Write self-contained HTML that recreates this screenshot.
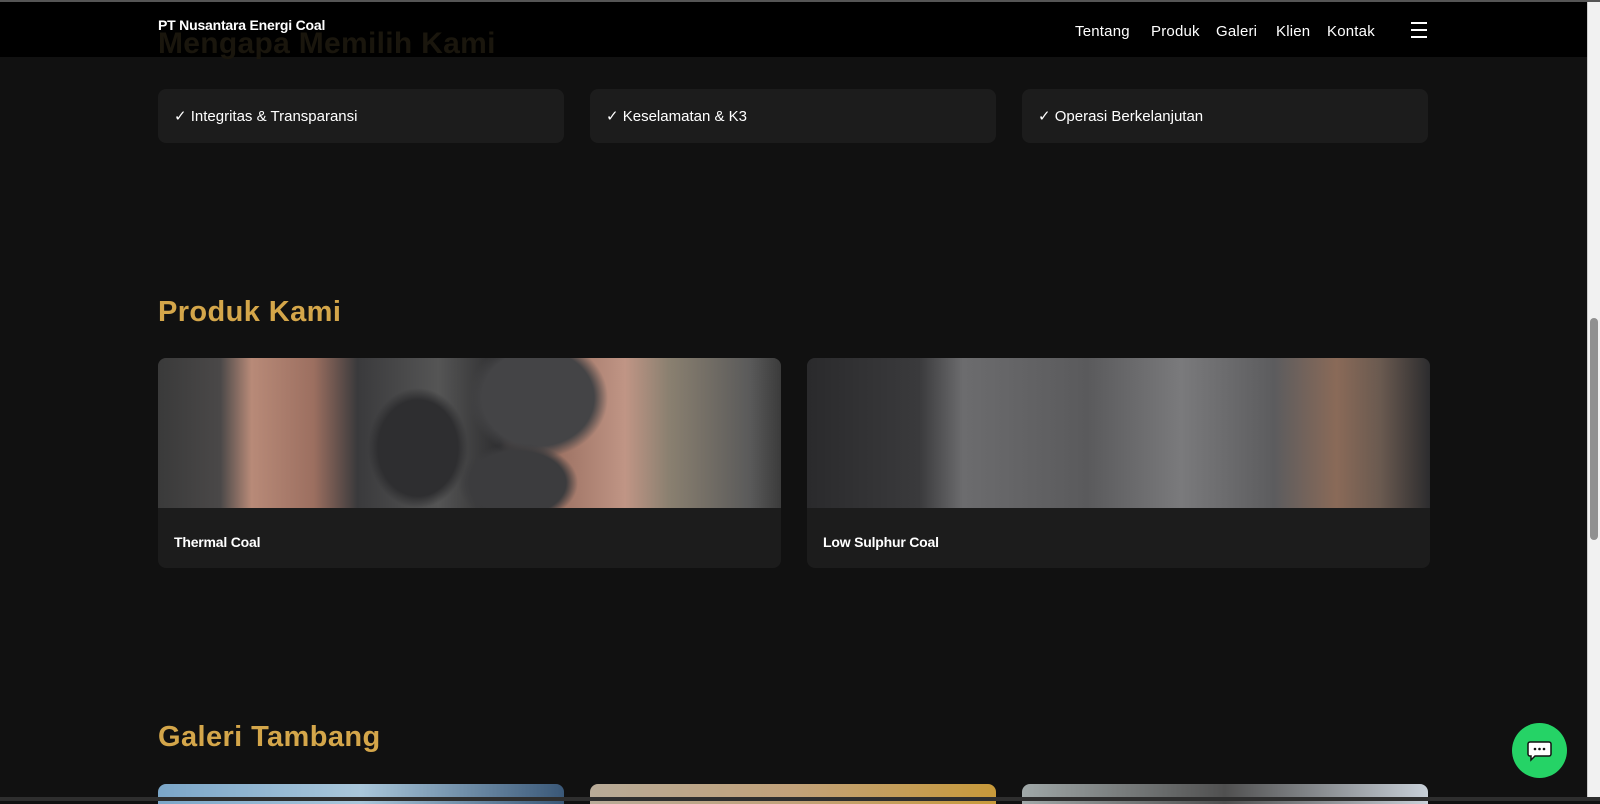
<!DOCTYPE html>
<html><head><meta charset="utf-8"><style>
*{margin:0;padding:0;box-sizing:border-box}
html,body{width:1600px;height:801px;overflow:hidden;background:#111;font-family:"Liberation Sans",sans-serif;color:#fff}
.topline{position:absolute;left:0;top:0;width:1600px;height:2px;background:#555}
.nav{position:absolute;left:0;top:2px;width:1587px;height:55px;background:#000;z-index:2}
.ghost{position:absolute;left:158px;top:27px;font-size:30px;font-weight:bold;letter-spacing:0.3px;z-index:3}
.logo{position:absolute;left:158px;top:17px;font-size:14px;font-weight:bold;letter-spacing:-0.2px;z-index:3}
.nl{position:absolute;top:23px;font-size:15px;letter-spacing:0.2px;z-index:3}
.ham{position:absolute;left:1411px;top:22px;width:16px;z-index:3}
.ham i{display:block;height:2px;background:#fff;margin-bottom:5px}
.card{position:absolute;top:89px;height:54px;width:406px;background:#1c1c1c;border-radius:8px;font-size:15px;padding:18px 0 0 16px}
h2{position:absolute;left:158px;font-size:29px;font-weight:bold;color:#d4a64a;letter-spacing:0.4px}
.pc{position:absolute;top:358px;width:623px;height:210px;background:#1c1c1c;border-radius:8px;overflow:hidden}
.pc .img{height:150px}
.pc .t{position:absolute;left:16px;top:176px;font-size:14px;font-weight:bold;letter-spacing:-0.2px}
.g{position:absolute;top:784px;width:406px;height:20px;border-radius:8px 8px 0 0}
.sb{position:absolute;left:1587px;top:2px;width:13px;height:795px;background:#f1f1f1;border-left:1px solid #ccc}
.th{position:absolute;left:1590px;top:318px;width:8px;height:222px;background:#909090;border-radius:4px}
.bb{position:absolute;left:0;top:797px;width:1600px;height:4px;background:#2e2e2e}
.chat{position:absolute;left:1512px;top:723px;width:55px;height:55px;border-radius:50%;background:#25d366}
</style></head><body>
<div class="topline"></div>
<div class="nav"></div>
<div class="ghost" style="color:#1a160d">Mengapa Memilih Kami</div>
<div class="logo">PT Nusantara Energi Coal</div>
<div class="nl" style="left:1075px">Tentang</div>
<div class="nl" style="left:1151px">Produk</div>
<div class="nl" style="left:1216px">Galeri</div>
<div class="nl" style="left:1276px">Klien</div>
<div class="nl" style="left:1327px">Kontak</div>
<div class="ham"><i></i><i></i><i></i></div>

<div class="card" style="left:158px">✓ Integritas &amp; Transparansi</div>
<div class="card" style="left:590px">✓ Keselamatan &amp; K3</div>
<div class="card" style="left:1022px">✓ Operasi Berkelanjutan</div>

<h2 style="top:296px">Produk Kami</h2>
<div class="pc" style="left:158px">
 <div class="img" style="background:radial-gradient(ellipse 50px 60px at 260px 90px,#2e2e30 80%,transparent 100%),radial-gradient(ellipse 60px 40px at 360px 125px,#3c3c3e 80%,transparent 100%),radial-gradient(ellipse 70px 60px at 380px 40px,#444446 80%,transparent 100%),linear-gradient(90deg,#3a3a3a 0%,#4a4848 10%,#b88a78 15%,#9c6f60 25%,#3a3a3c 32%,#555 45%,#2d2d2f 55%,#a07566 65%,#c09585 75%,#8a8070 82%,#5a5a5a 95%,#3b3b3b 100%)"></div>
 <div class="t">Thermal Coal</div></div>
<div class="pc" style="left:807px">
 <div class="img" style="background:linear-gradient(90deg,#2a2a2c 0%,#3a3a3c 18%,#6c6c6e 25%,#5a5a5c 45%,#7a7a7c 60%,#5c5c5e 75%,#8a6a58 85%,#6a5a50 92%,#2c2c2e 100%)"></div>
 <div class="t">Low Sulphur Coal</div></div>

<h2 style="top:721px">Galeri Tambang</h2>
<div class="g" style="left:158px;background:linear-gradient(90deg,#7ba6c8,#a9c7db,#3a5878)"></div>
<div class="g" style="left:590px;background:linear-gradient(90deg,#b8ab98,#c2a27a,#c89a3a)"></div>
<div class="g" style="left:1022px;background:linear-gradient(90deg,#a0a8a8,#505050,#c8d0d8)"></div>

<div class="chat"><svg width="55" height="55" viewBox="0 0 55 55"><path d="M18 19h19a2 2 0 0 1 2 2v10a2 2 0 0 1-2 2H23l-4 4v-4h-1a2 2 0 0 1-2-2V21a2 2 0 0 1 2-2z" fill="#fff" stroke="#111" stroke-width="1.5"/><circle cx="23" cy="26" r="1.3" fill="#111"/><circle cx="27.5" cy="26" r="1.3" fill="#111"/><circle cx="32" cy="26" r="1.3" fill="#111"/></svg></div>
<div class="sb"></div><div class="th"></div>
<div class="bb"></div>
</body></html>
